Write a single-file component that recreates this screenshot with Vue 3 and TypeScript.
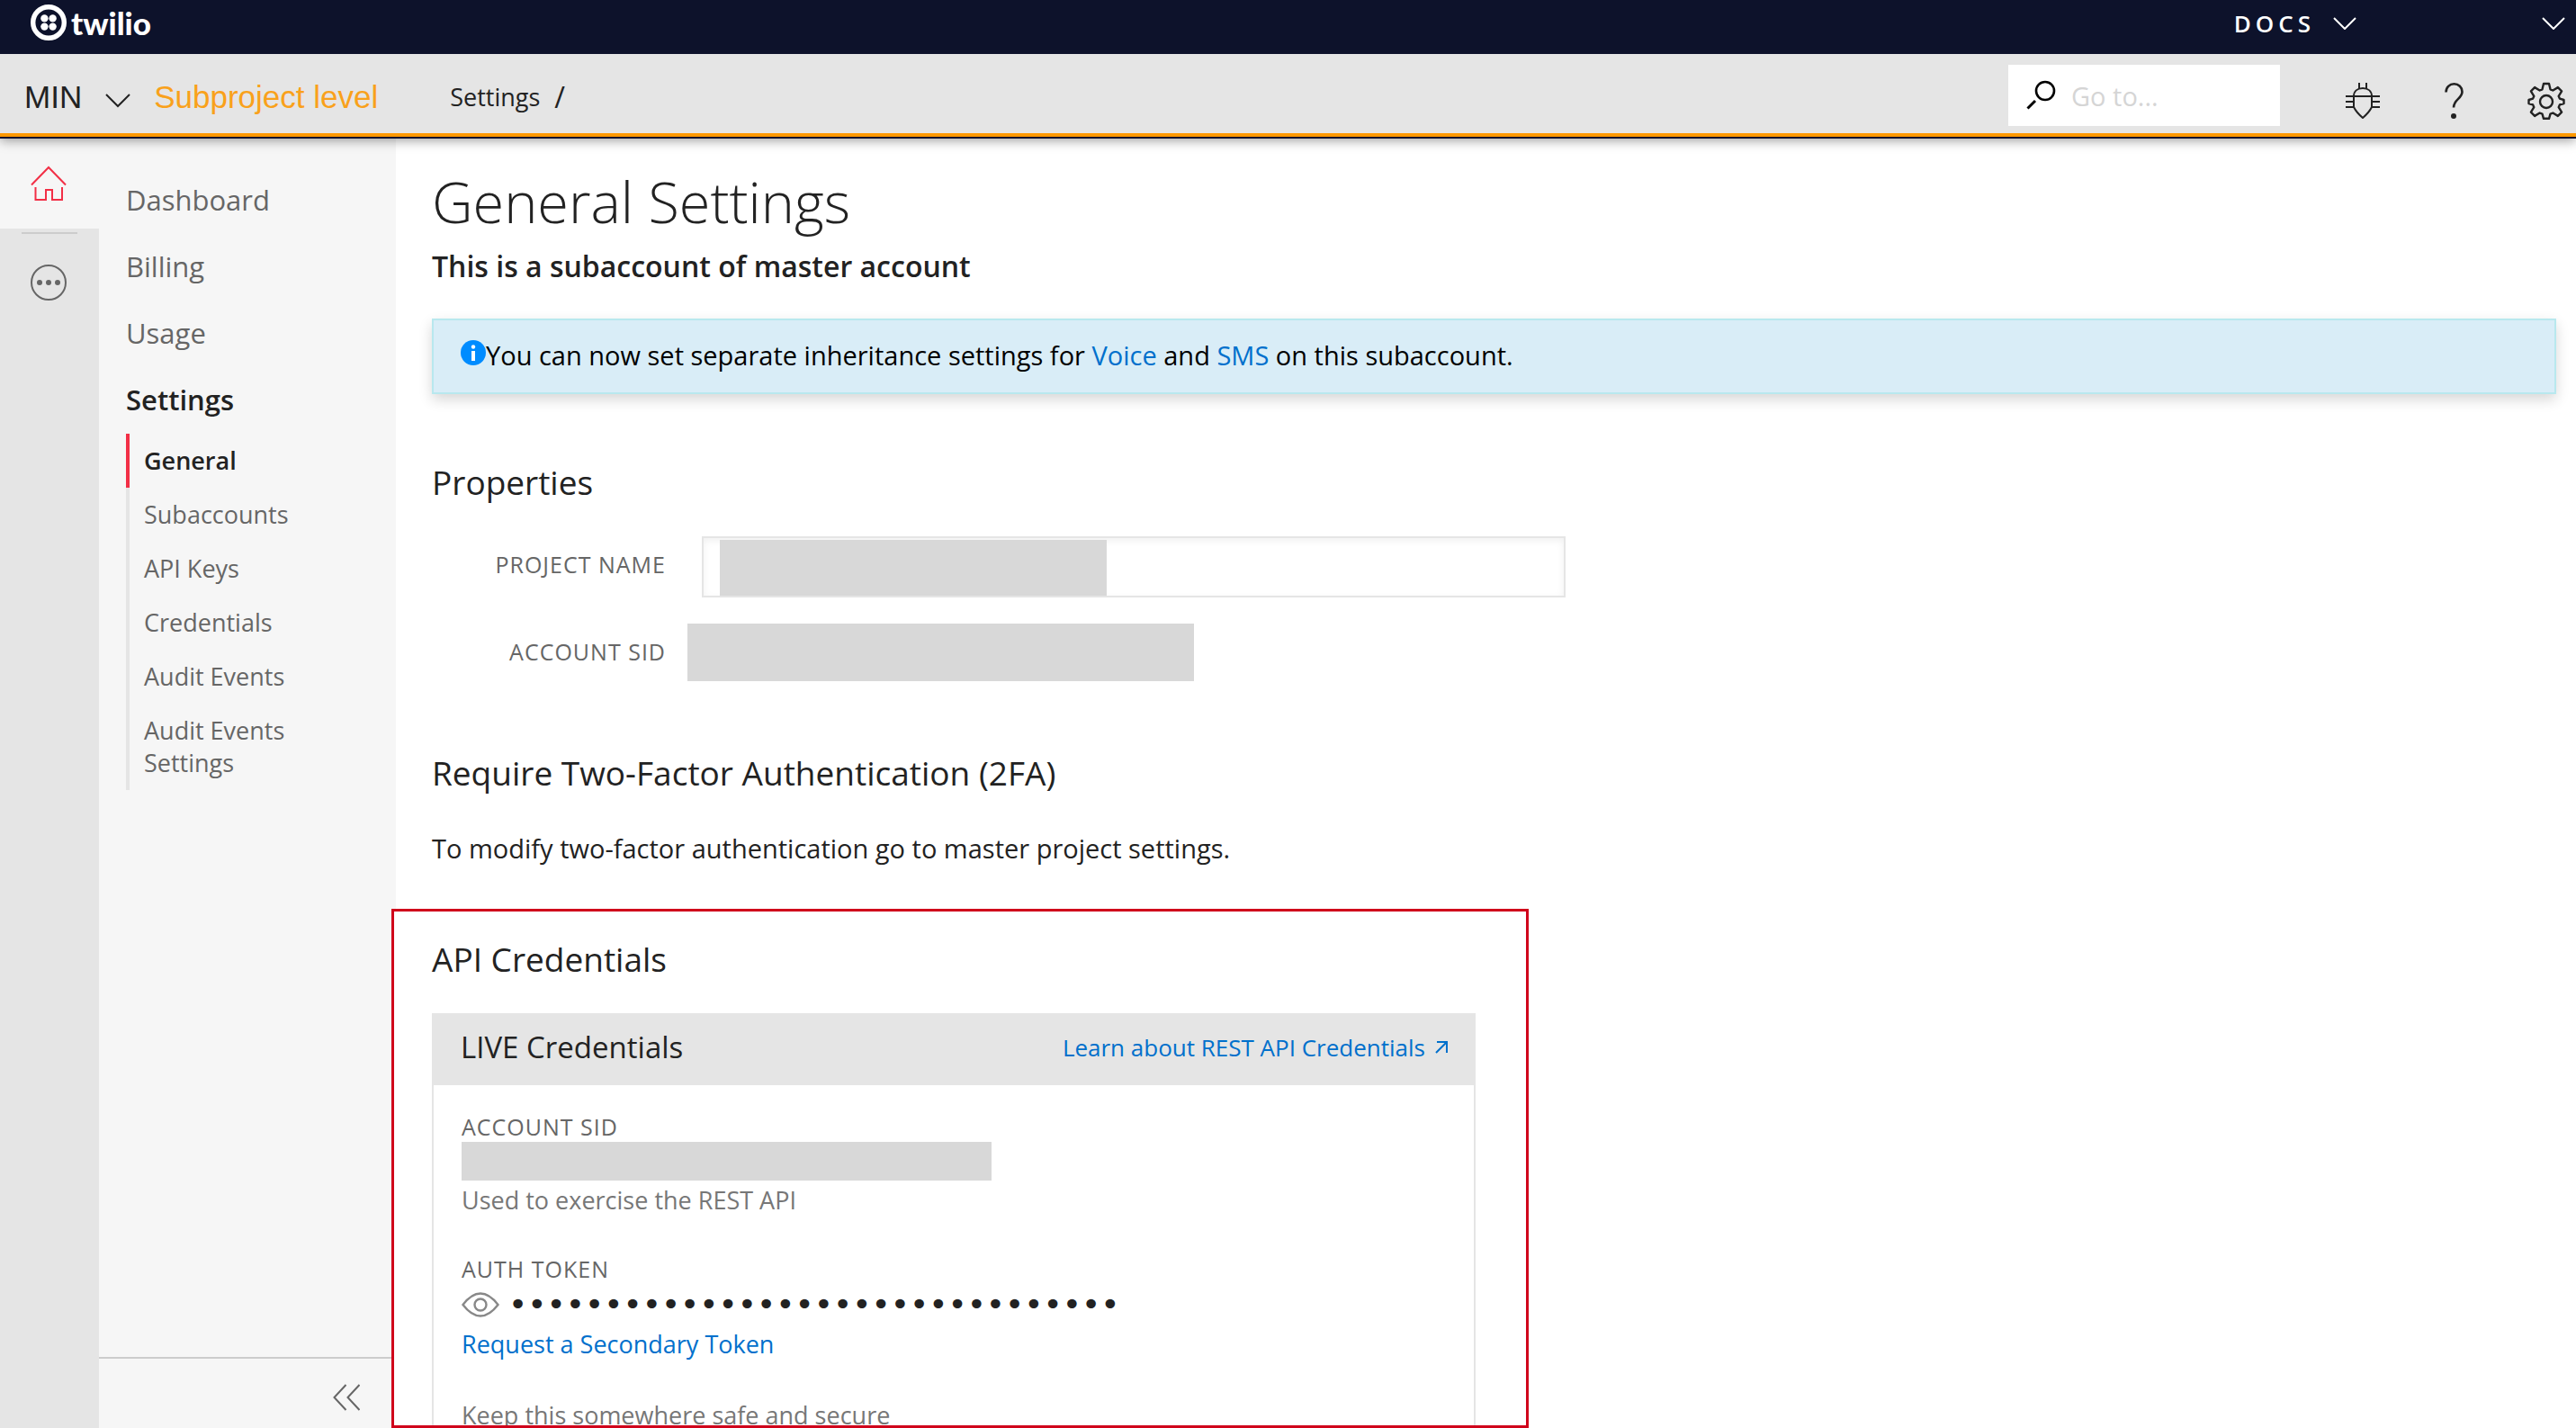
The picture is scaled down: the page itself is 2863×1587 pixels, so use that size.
<script setup lang="ts">
import { ref } from 'vue'

interface NavItem {
  label: string
  active?: boolean
}

const primaryNav: NavItem[] = [
  { label: 'Dashboard' },
  { label: 'Billing' },
  { label: 'Usage' },
  { label: 'Settings', active: true },
]

const settingsNav: NavItem[] = [
  { label: 'General', active: true },
  { label: 'Subaccounts' },
  { label: 'API Keys' },
  { label: 'Credentials' },
  { label: 'Audit Events' },
  { label: 'Audit Events Settings' },
]

const query = ref('')
const projectName = ref('')
const maskedToken = '•'.repeat(32)
</script>

<template>
  <div class="app">
    <header class="header">
      <div class="topbar">
        <a class="logo" href="#">
          <svg width="40" height="40" viewBox="0 0 40 40" aria-hidden="true">
            <circle cx="20" cy="20" r="17.3" fill="none" stroke="#fff" stroke-width="5.4" />
            <g fill="#fff">
              <circle cx="15.4" cy="15.4" r="4.2" />
              <circle cx="24.600" cy="15.4" r="4.2" />
              <circle cx="15.4" cy="24.600" r="4.2" />
              <circle cx="24.600" cy="24.600" r="4.2" />
            </g>
          </svg>
          <span>twilio</span>
        </a>
        <div class="topbar-menus">
          <button class="plain docs" type="button">
            <span>DOCS</span>
            <svg width="26" height="14" viewBox="0 0 26 14" aria-hidden="true">
              <path d="M1 1 13 13 25 1" fill="none" stroke="#fff" stroke-width="2" />
            </svg>
          </button>
          <button class="plain" type="button" aria-label="Account menu">
            <svg width="26" height="14" viewBox="0 0 26 14" aria-hidden="true">
              <path d="M1 1 13 13 25 1" fill="none" stroke="#fff" stroke-width="2" />
            </svg>
          </button>
        </div>
      </div>

      <div class="projectbar">
        <div class="project">
          <button class="plain project-switch" type="button">
            <span>MIN</span>
            <svg width="28" height="28" viewBox="0 0 28 28" aria-hidden="true">
              <path d="M1 11 14 24 27 11" fill="none" stroke="#222" stroke-width="2" />
            </svg>
          </button>
          <span class="level">Subproject level</span>
          <nav class="crumbs" aria-label="Breadcrumb">
            <a href="#">Settings</a>
            <span class="slash">/</span>
          </nav>
        </div>
        <div class="tools">
          <label class="search">
            <svg width="34" height="34" viewBox="0 0 34 34" aria-hidden="true">
              <circle cx="21" cy="12" r="10" fill="none" stroke="#000" stroke-width="2.6" />
              <path d="M10 23 1.5 31.5" stroke="#000" stroke-width="3" />
            </svg>
            <input v-model="query" type="text" placeholder="Go to..." aria-label="Go to" />
          </label>
          <div class="tool-icons">
            <button class="plain" type="button" aria-label="Debugger">
              <svg width="38" height="40" viewBox="0 0 38 40" fill="none" stroke="#222" stroke-width="2" aria-hidden="true">
                <path d="M15 0v6.500M23 0v6.500M0 15h38M0 21h9M29 21h9M0 27h9M29 27h9" />
                <path d="M9 15C9 9.500 13 6 19 6s10 3.500 10 9v12Q26 33 19 39 12 33 9 27z" />
              </svg>
            </button>
            <button class="plain" type="button" aria-label="Help">
              <svg width="22" height="40" viewBox="-1 0 22 40" fill="none" aria-hidden="true">
                <path d="M1.500 10.500C1.500 5 5.500 1.300 10.500 1.300s9 3.700 9 8.700c0 7.500-9.500 8.500-9.500 17.500" stroke="#222" stroke-width="2.600" />
                <circle cx="10" cy="37" r="3" fill="#222" />
              </svg>
            </button>
            <button class="plain" type="button" aria-label="Settings">
              <svg width="42" height="42" viewBox="0 0 42 42" fill="none" stroke="#222" stroke-width="2.400" stroke-linejoin="round" aria-hidden="true">
                <path d="M18 2h6l1.500 6.300 2.800 1.200 5.600-3.400 4.200 4.200-3.400 5.600 1.200 2.700L40.500 20v4l-4.600 1.400-1.200 2.800 3.400 5.500-4.200 4.200-5.600-3.400-2.800 1.200L24 40.800h-6l-1.500-5.100-2.800-1.200-5.600 3.400-4.200-4.200 3.400-5.500-1.200-2.800L1.500 24v-4l4.600-1.400 1.200-2.700-3.400-5.600 4.200-4.200 5.600 3.400 2.800-1.200z" />
                <circle cx="21" cy="22" r="7" />
              </svg>
            </button>
          </div>
        </div>
      </div>
    </header>

    <div class="body">
      <nav class="rail" aria-label="Products">
        <a class="rail-home" href="#" aria-label="Home">
          <svg width="40" height="40" viewBox="0 0 40 40" fill="none" stroke="#f22f46" stroke-width="2" aria-hidden="true">
            <path d="M1 21.500 20 2l19 19.500M5.500 24v14H17V27h7v11h11V24" />
          </svg>
        </a>
        <hr />
        <a class="rail-more" href="#" aria-label="All products">
          <svg width="40" height="40" viewBox="0 0 40 40" aria-hidden="true">
            <circle cx="20" cy="20" r="19" fill="none" stroke="#666" stroke-width="2" />
            <g fill="#666">
              <circle cx="10" cy="20" r="3" />
              <circle cx="20" cy="20" r="3" />
              <circle cx="30" cy="20" r="3" />
            </g>
          </svg>
        </a>
      </nav>

      <aside class="sidebar">
        <nav class="side-nav" aria-label="Project">
          <ul class="primary">
            <li v-for="item in primaryNav" :key="item.label">
              <a href="#" :class="{ active: item.active }">{{ item.label }}</a>
            </li>
          </ul>
          <ul class="secondary">
            <li v-for="item in settingsNav" :key="item.label" :class="{ active: item.active }">
              <a href="#">{{ item.label }}</a>
            </li>
          </ul>
        </nav>
        <div class="side-footer">
          <button class="plain" type="button" aria-label="Collapse sidebar">
            <svg width="30" height="30" viewBox="0 0 30 30" fill="none" stroke="#666" stroke-width="2" aria-hidden="true">
              <path d="M14.500 1 1.500 15l13 14M29.500 1l-13 14 13 14" />
            </svg>
          </button>
        </div>
      </aside>

      <main class="main">
        <h1>General Settings</h1>
        <p class="subtitle">This is a subaccount of master account</p>

        <div class="alert" role="status">
          <svg width="28" height="34" viewBox="0 0 28 34" aria-hidden="true">
            <circle cx="14" cy="17" r="14" fill="#008cff" />
            <circle cx="14" cy="10.500" r="2.200" fill="#fff" />
            <path d="M14 15v11" stroke="#fff" stroke-width="4" />
          </svg>
          <p>
            You can now set separate inheritance settings for <a href="#">Voice</a> and
            <a href="#">SMS</a> on this subaccount.
          </p>
        </div>

        <h2 class="properties-title">Properties</h2>
        <form class="form" @submit.prevent>
          <div class="field">
            <label class="caps" for="project-name">PROJECT NAME</label>
            <div class="name-box">
              <input id="project-name" v-model="projectName" type="text" />
              <span class="redacted"></span>
            </div>
          </div>
          <div class="field static">
            <span class="caps">ACCOUNT SID</span>
            <span class="redacted"></span>
          </div>
        </form>

        <h2 class="twofa-title">Require Two-Factor Authentication (2FA)</h2>
        <p class="note">To modify two-factor authentication go to master project settings.</p>

        <section class="highlight">
          <h2>API Credentials</h2>
          <div class="card">
            <div class="card-head">
              <h3>LIVE Credentials</h3>
              <a href="#">
                Learn about REST API Credentials
                <svg width="14" height="14" viewBox="0 0 14 14" fill="none" stroke="#0070cc" stroke-width="2" aria-hidden="true">
                  <path d="M2 1h11v12M13 1 1 13" />
                </svg>
              </a>
            </div>
            <div class="card-body">
              <div class="caps">ACCOUNT SID</div>
              <div class="redacted sid"></div>
              <p class="hint">Used to exercise the REST API</p>

              <div class="caps token-label">AUTH TOKEN</div>
              <div class="token">
                <button class="plain" type="button" aria-label="Show auth token">
                  <svg width="42" height="28" viewBox="0 0 42 28" fill="none" stroke="#888" stroke-width="2.400" aria-hidden="true">
                    <path d="M1.500 14C8 5.500 14 1.500 21 1.500S34 5.500 40.500 14C34 22.500 28 26.500 21 26.500S8 22.500 1.500 14z" />
                    <circle cx="21" cy="14" r="6.500" />
                  </svg>
                </button>
                <span class="dots">{{ maskedToken }}</span>
              </div>
              <a class="secondary-link" href="#">Request a Secondary Token</a>
              <p class="hint safe">Keep this somewhere safe and secure</p>
            </div>
          </div>
        </section>
      </main>
    </div>
  </div>
</template>

<style>
body {
  margin: 0;
}
</style>

<style scoped>
.app {
  display: flex;
  flex-direction: column;
  height: 100vh;
  overflow: hidden;
  background: #fff;
  color: #222;
  font-family: 'Open Sans', 'Noto Sans', sans-serif;
  font-size: 27px;
  line-height: 40px;
}

.app * {
  box-sizing: border-box;
}

h1,
h2,
h3,
p,
ul {
  margin: 0;
  padding: 0;
  font-weight: 400;
}

ul {
  list-style: none;
}

a {
  color: #0070cc;
  text-decoration: none;
}

svg {
  display: block;
  flex: none;
}

.plain {
  display: flex;
  align-items: center;
  margin: 0;
  padding: 0;
  border: 0;
  background: none;
  color: inherit;
  font: inherit;
}

.header {
  position: relative;
  z-index: 2;
  flex: none;
  border-bottom: 2px solid #0d122b;
  box-shadow: 0 2px 12px rgba(0, 0, 0, 0.4);
}

.topbar {
  display: flex;
  align-items: center;
  justify-content: space-between;
  height: 60px;
  padding: 0 12px 10px 34px;
  background: #0d122b;
  color: #fff;
}

.logo {
  display: flex;
  align-items: center;
  gap: 5px;
  color: #fff;
  font-family: Lato, sans-serif;
  font-size: 35px;
  font-weight: 900;
}

.topbar-menus {
  display: flex;
  align-items: center;
  gap: 206px;
  padding-top: 2px;
}

.docs {
  gap: 20px;
  font-size: 26px;
  font-weight: 600;
  letter-spacing: 5px;
}

.projectbar {
  display: flex;
  align-items: center;
  justify-content: space-between;
  height: 92px;
  padding: 4px 12px 0 27px;
  border-bottom: 4px solid #ff9800;
  background: #e5e5e5;
}

.project {
  display: flex;
  align-items: center;
  padding-top: 4px;
}

.project-switch {
  gap: 26px;
  font-family: 'Liberation Sans', sans-serif;
  font-size: 35px;
}

.level {
  margin-left: 26px;
  color: #f9a11b;
  font-family: 'Liberation Sans', sans-serif;
  font-size: 35px;
}

.crumbs {
  display: flex;
  gap: 16px;
  margin-left: 80px;
}

.crumbs a {
  color: #222;
}

.slash {
  font-size: 32px;
}

.tools {
  display: flex;
  align-items: center;
  gap: 73px;
}

.search {
  display: flex;
  align-items: center;
  gap: 16px;
  width: 302px;
  height: 68px;
  padding: 0 20px;
  background: #fff;
}

.search input {
  flex: 1;
  min-width: 0;
  height: 60px;
  padding: 0;
  border: 0;
  outline: 0;
  background: none;
  font: inherit;
  font-size: 29px;
}

.search input::placeholder {
  color: #d5d5d5;
  opacity: 1;
}

.tool-icons {
  display: flex;
  align-items: center;
  gap: 71px;
  padding-top: 12px;
}

.body {
  display: flex;
  flex: 1;
  min-height: 0;
}

.rail {
  flex: none;
  width: 110px;
  background: #e5e5e5;
}

.rail-home {
  display: flex;
  align-items: center;
  height: 100px;
  padding-left: 34px;
  background: #f6f6f6;
}

.rail hr {
  width: 62px;
  height: 2px;
  margin: 4px 24px 34px;
  border: 0;
  background: #ccc;
}

.rail-more {
  display: block;
  padding-left: 34px;
}

.sidebar {
  display: flex;
  flex: none;
  flex-direction: column;
  justify-content: space-between;
  width: 330px;
  background: #f6f6f6;
}

.side-nav {
  padding: 48px 40px 0 30px;
}

.primary {
  display: flex;
  flex-direction: column;
  gap: 34px;
  font-size: 31px;
}

.primary a,
.secondary a {
  color: #666;
}

.primary .active,
.secondary .active a {
  color: #222;
  font-weight: 600;
}

.secondary {
  margin-top: 18px;
  line-height: 36px;
}

.secondary li {
  padding: 12px 0 12px 16px;
  border-left: 4px solid #e5e5e5;
}

.secondary .active {
  border-color: #f22f46;
}

.side-footer {
  display: flex;
  justify-content: flex-end;
  height: 79px;
  padding: 8px 40px 0;
  border-top: 2px solid #ccc;
}

.main {
  display: flex;
  flex: 1;
  flex-direction: column;
  min-width: 0;
  padding: 30px 22px 0 40px;
}

.main > * {
  flex: none;
}

h1 {
  font-size: 63px;
  font-weight: 300;
  line-height: 80px;
}

h2 {
  font-size: 37px;
  line-height: 48px;
}

h3 {
  font-size: 33px;
}

.subtitle {
  margin-top: 8px;
  font-size: 32px;
  font-weight: 600;
  line-height: 48px;
}

.alert {
  display: flex;
  align-items: flex-start;
  margin-top: 34px;
  padding: 19px 30px 21px;
  border: 2px solid #b8e8ee;
  background: #d9edf7;
  box-shadow: 0 6px 14px rgba(0, 0, 0, 0.16);
  color: #000;
  font-size: 29px;
}

.properties-title {
  margin-top: 74px;
}

.form {
  display: flex;
  flex-direction: column;
  gap: 29px;
  margin-top: 36px;
}

.field {
  display: flex;
  align-items: flex-start;
  gap: 40px;
}

.field.static {
  gap: 24px;
}

.caps {
  color: #666;
  font-size: 25px;
  line-height: 32px;
  letter-spacing: 1px;
}

.field .caps {
  width: 260px;
  line-height: 62px;
  text-align: right;
}

.redacted {
  background: #d8d8d8;
}

.name-box {
  position: relative;
  width: 960px;
}

.name-box input {
  display: block;
  width: 100%;
  height: 68px;
  padding: 0 20px;
  border: 2px solid #e5e5e5;
  border-radius: 0;
  outline: 0;
  background: #fff;
  box-shadow: inset 0 3px 8px rgba(0, 0, 0, 0.06);
  font: inherit;
}

.name-box .redacted {
  position: absolute;
  top: 4px;
  bottom: 2px;
  left: 20px;
  width: 430px;
}

.static .redacted {
  width: 563px;
  height: 64px;
}

.twofa-title {
  margin-top: 78px;
}

.note {
  margin-top: 40px;
  font-size: 29px;
}

.main > .highlight {
  flex: 1;
  min-height: 0;
  overflow: hidden;
  width: 1264px;
  margin: 47px 0 0 -45px;
  padding: 29px 56px 0 42px;
  border: 3px solid #d0021b;
  background: #fff;
}

.highlight {
  position: relative;
}

.card {
  margin-top: 36px;
  border: 2px solid #e5e5e5;
  border-top: 0;
}

.card-head {
  display: flex;
  align-items: center;
  justify-content: space-between;
  height: 80px;
  padding: 0 29px 5px 30px;
  background: #e5e5e5;
}

.card-head a {
  display: flex;
  align-items: center;
  gap: 11px;
  font-size: 26px;
}

.card-body {
  padding: 30px 31px;
}

.sid {
  width: 589px;
  height: 43px;
  margin: 1px 0 2px;
}

.hint {
  color: #777;
}

.token-label {
  margin-top: 40px;
}

.token {
  display: flex;
  align-items: center;
  gap: 10px;
  height: 44px;
  margin: 2px 0;
}

.dots {
  font-family: 'DejaVu Sans', sans-serif;
  font-size: 36px;
}

.secondary-link {
  display: block;
}

.safe {
  margin-top: 39px;
}
</style>
